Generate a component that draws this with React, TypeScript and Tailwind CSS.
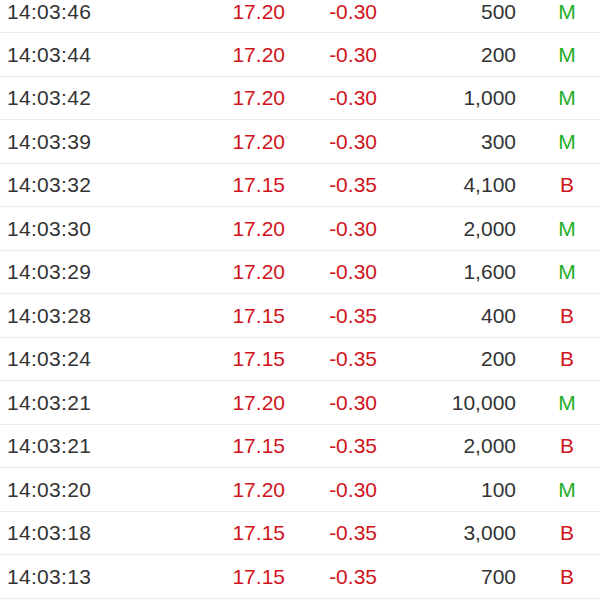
const TRADES = [
  { time: "14:03:46", price: "17.20", change: "-0.30", volume: "500", side: "M" },
  { time: "14:03:44", price: "17.20", change: "-0.30", volume: "200", side: "M" },
  { time: "14:03:42", price: "17.20", change: "-0.30", volume: "1,000", side: "M" },
  { time: "14:03:39", price: "17.20", change: "-0.30", volume: "300", side: "M" },
  { time: "14:03:32", price: "17.15", change: "-0.35", volume: "4,100", side: "B" },
  { time: "14:03:30", price: "17.20", change: "-0.30", volume: "2,000", side: "M" },
  { time: "14:03:29", price: "17.20", change: "-0.30", volume: "1,600", side: "M" },
  { time: "14:03:28", price: "17.15", change: "-0.35", volume: "400", side: "B" },
  { time: "14:03:24", price: "17.15", change: "-0.35", volume: "200", side: "B" },
  { time: "14:03:21", price: "17.20", change: "-0.30", volume: "10,000", side: "M" },
  { time: "14:03:21", price: "17.15", change: "-0.35", volume: "2,000", side: "B" },
  { time: "14:03:20", price: "17.20", change: "-0.30", volume: "100", side: "M" },
  { time: "14:03:18", price: "17.15", change: "-0.35", volume: "3,000", side: "B" },
  { time: "14:03:13", price: "17.15", change: "-0.35", volume: "700", side: "B" },
];

export default function App() {
  return (
    <div className="w-[600px] h-[600px] overflow-hidden bg-white font-['Liberation_Sans',Arial,sans-serif] text-[21px] text-[#333333]">
      {TRADES.map((t, i) => (
        <div
          key={i}
          className={
            i === 0
              ? "flex items-center h-[33px] pb-[8px] border-b border-[#ececec] pl-[7px]"
              : "flex items-center h-[43.5px] border-b border-[#ececec] pl-[7px]"
          }
        >
          <span className="w-[200px] tracking-[0.3px]">{t.time}</span>
          <span className="w-[78px] text-right text-[#d0141c]">{t.price}</span>
          <span className="w-[92px] text-right text-[#d0141c]">{t.change}</span>
          <span className="w-[139px] text-right">{t.volume}</span>
          <span
            className={
              t.side === "M"
                ? "ml-[31px] w-[40px] text-center text-[#1fae2a]"
                : "ml-[31px] w-[40px] text-center text-[#d0141c]"
            }
          >
            {t.side}
          </span>
        </div>
      ))}
    </div>
  );
}
